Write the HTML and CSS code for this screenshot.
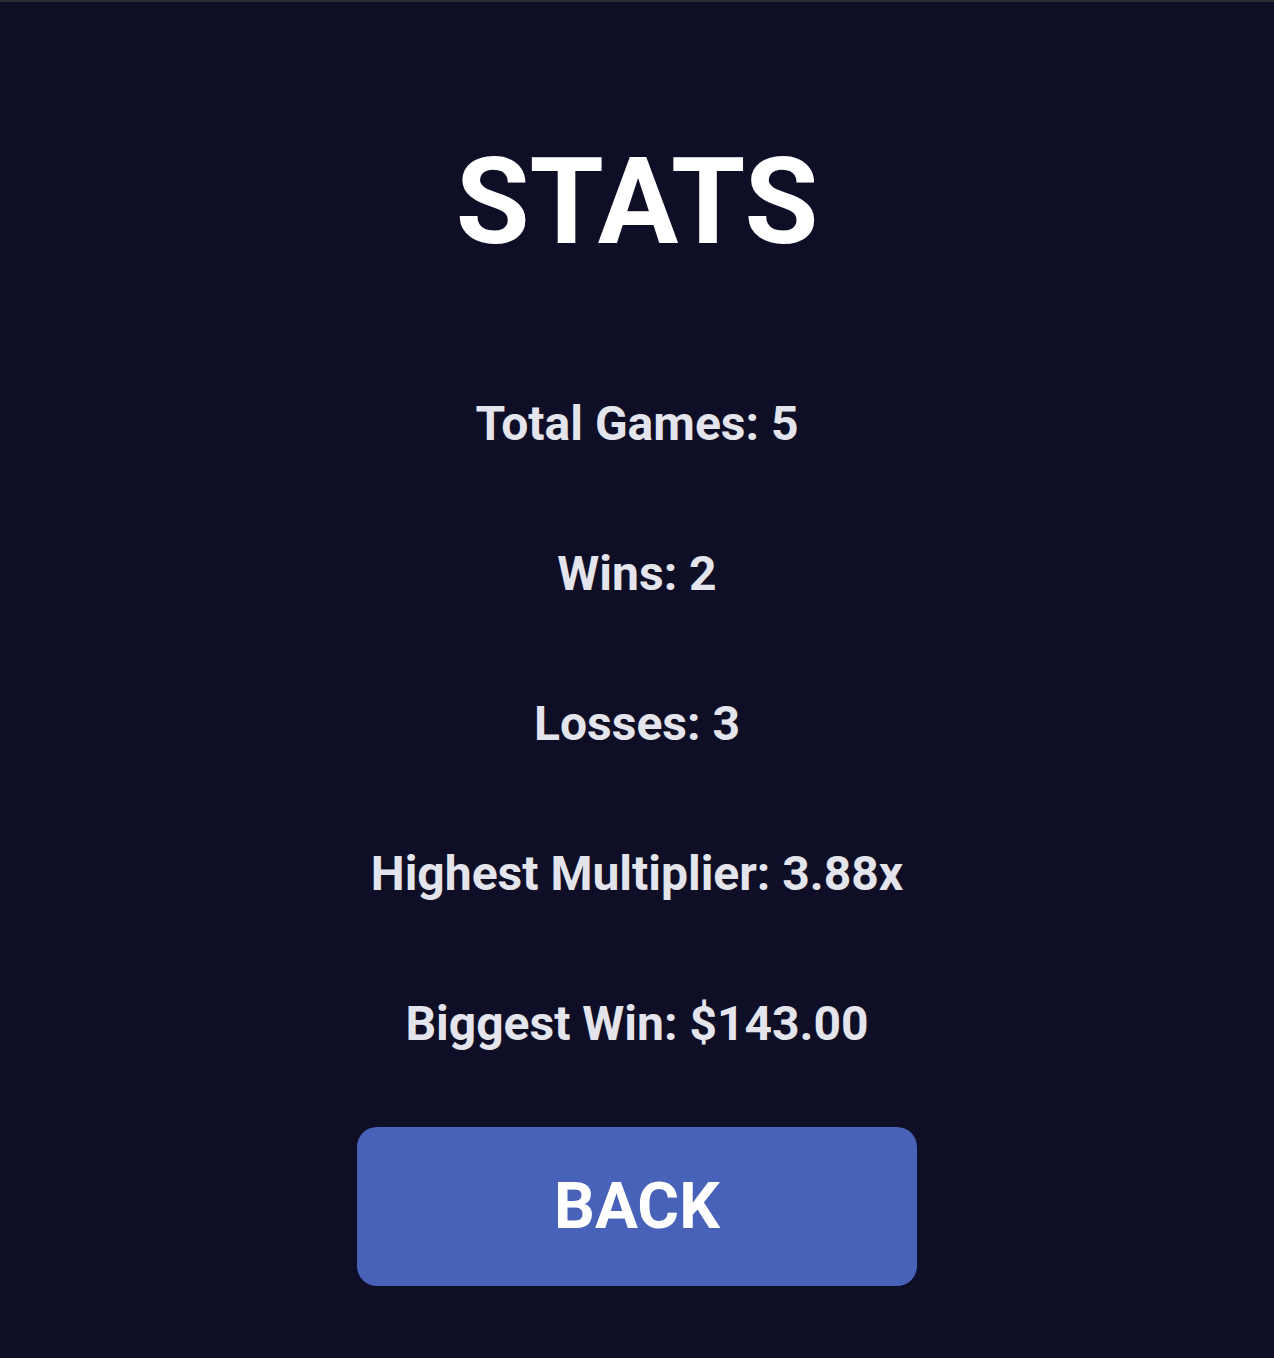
FILE: index.html
```html
<!DOCTYPE html>
<html>
<head>
<meta charset="utf-8">
<link rel="stylesheet" href="styles.css">
</head>
<body>
<main class="screen">
  <h1 class="title">STATS</h1>
  <ul class="stats">
    <li class="stat">Total Games: 5</li>
    <li class="stat">Wins: 2</li>
    <li class="stat">Losses: 3</li>
    <li class="stat">Highest Multiplier: 3.88x</li>
    <li class="stat">Biggest Win: $143.00</li>
  </ul>
  <button class="back">BACK</button>
</main>
</body>
</html>
```
FILE: styles.css
```css
html, body {
  margin: 0;
  padding: 0;
  height: 100%;
}
body {
  background: #0e0e26;
  border-top: 2px solid #2b2b2e;
  box-sizing: border-box;
  font-family: Roboto, "Liberation Sans", sans-serif;
  overflow: hidden;
}
.screen {
  display: flex;
  flex-direction: column;
  align-items: center;
  padding-top: 140px;
}
.title {
  margin: 0;
  font-size: 120px;
  line-height: 120px;
  font-weight: 700;
  color: #ffffff;
}
.stats {
  list-style: none;
  margin: 138px 0 0;
  padding: 0;
  display: flex;
  flex-direction: column;
  align-items: center;
  gap: 102px;
}
.stat {
  font-size: 48px;
  line-height: 48px;
  font-weight: 700;
  color: #e4e4ec;
}
.back {
  margin-top: 79px;
  width: 560px;
  height: 159px;
  border: none;
  border-radius: 20px;
  background: #4762b8;
  color: #ffffff;
  font-family: Roboto, "Liberation Sans", sans-serif;
  font-weight: 700;
  font-size: 64px;
  padding: 0;
  cursor: pointer;
}
```
